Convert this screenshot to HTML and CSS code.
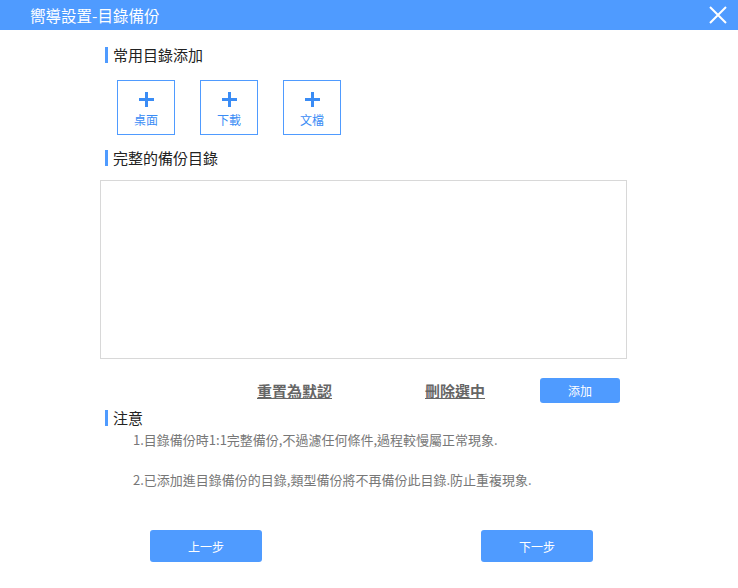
FILE: index.html
```html
<!DOCTYPE html>
<html lang="zh-Hant">
<head>
  <meta charset="UTF-8" />
  <title>嚮導設置-目錄備份</title>
  <link rel="stylesheet" href="styles.css">
</head>
<body>
  <div class="titlebar">
    <span class="title">嚮導設置-目錄備份</span>
    <svg class="close" width="20" height="20" viewBox="0 0 20 20">
      <path d="M2 2 L18 18 M18 2 L2 18" stroke="#fff" stroke-width="2" fill="none"/>
    </svg>
  </div>

  <div class="content">
    <h3 class="section-head first">常用目錄添加</h3>
    <div class="tiles">
      <div class="tile">
        <svg class="plus" width="15" height="15" viewBox="0 0 15 15"><path d="M7.5 0 V15 M0 7.5 H15" stroke="#3a8cf5" stroke-width="3"/></svg>
        <span class="tile-label">桌面</span>
      </div>
      <div class="tile">
        <svg class="plus" width="15" height="15" viewBox="0 0 15 15"><path d="M7.5 0 V15 M0 7.5 H15" stroke="#3a8cf5" stroke-width="3"/></svg>
        <span class="tile-label">下載</span>
      </div>
      <div class="tile">
        <svg class="plus" width="15" height="15" viewBox="0 0 15 15"><path d="M7.5 0 V15 M0 7.5 H15" stroke="#3a8cf5" stroke-width="3"/></svg>
        <span class="tile-label">文檔</span>
      </div>
    </div>

    <h3 class="section-head">完整的備份目錄</h3>
    <div class="dir-list"></div>

    <div class="actions">
      <a class="link-btn reset">重置為默認</a>
      <a class="link-btn remove">刪除選中</a>
      <button class="btn small">添加</button>
    </div>

    <h3 class="section-head notice">注意</h3>
    <p class="note">1.目錄備份時1:1完整備份,不過濾任何條件,過程較慢屬正常現象.</p>
    <p class="note">2.已添加進目錄備份的目錄,類型備份將不再備份此目錄.防止重複現象.</p>

    <div class="footer">
      <button class="btn wide">上一步</button>
      <button class="btn wide">下一步</button>
    </div>
  </div>
</body>
</html>
```

FILE: styles.css
```css
body {
  margin: 0;
  width: 738px;
  height: 588px;
  background: #fff;
  font-family: "Noto Sans CJK TC", "Noto Sans", sans-serif;
  color: #222;
  overflow: hidden;
}

.titlebar {
  height: 30px;
  background: #4f9bff;
  display: flex;
  align-items: center;
  justify-content: space-between;
  padding: 0 10px 0 30px;
}

.title {
  color: #fff;
  font-size: 15.5px;
}

.section-head {
  margin: 0 0 0 105px;
  border-left: 3px solid #4f9bff;
  padding-left: 5px;
  font-size: 15px;
  font-weight: normal;
  line-height: 16px;
  color: #222;
}

.section-head.first {
  margin-top: 17px;
}

.tiles {
  display: flex;
  gap: 25px;
  margin: 17px 0 0 117px;
}

.tile {
  width: 56px;
  height: 53px;
  border: 1px solid #4f9bff;
  display: flex;
  flex-direction: column;
  align-items: center;
  color: #3a8cf5;
}

.plus {
  display: block;
  margin-top: 11px;
}

.tile-label {
  font-size: 12px;
  line-height: 14px;
  margin-top: 6px;
}

.tiles + .section-head {
  margin-top: 15px;
}

.dir-list {
  margin: 14px 0 0 100px;
  width: 525px;
  height: 177px;
  border: 1px solid #d8d8d8;
}

.actions {
  display: flex;
  align-items: center;
  margin: 19px 0 0 257px;
  height: 25px;
}

.link-btn {
  font-size: 15px;
  font-weight: bold;
  color: #666;
  text-decoration: underline;
}

.remove {
  margin-left: 93px;
}

.btn {
  border: none;
  border-radius: 3px;
  background: #4f9bff;
  color: #fff;
  font-family: inherit;
  font-size: 12px;
  padding: 0;
}

.btn.small {
  width: 80px;
  height: 25px;
  margin-left: 55px;
}

.notice {
  margin-top: 7px;
}

.note {
  margin: 5px 0 0 133px;
  font-size: 13px;
  line-height: 17px;
  color: #777;
}

.note + .note {
  margin-top: 23px;
}

.footer {
  display: flex;
  justify-content: space-between;
  margin: 42px 0 0 150px;
  width: 443px;
}

.btn.wide {
  width: 112px;
  height: 32px;
}
```
